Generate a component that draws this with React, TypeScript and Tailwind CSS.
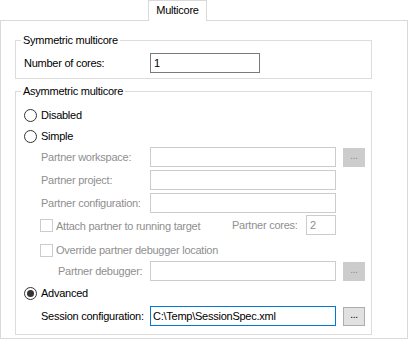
import React from "react";

const GRAY = "text-[#8f8f8f]";

function Radio({ checked }: { checked?: boolean }) {
  return (
    <span className="flex h-[13px] w-[13px] items-center justify-center rounded-full border border-[#333333] bg-white">
      {checked && <span className="h-[7px] w-[7px] rounded-full bg-[#333333]" />}
    </span>
  );
}

function Check() {
  return <span className="block h-[13px] w-[13px] border border-[#cccccc] bg-white" />;
}

function Dots({ enabled }: { enabled?: boolean }) {
  return (
    <div
      className={
        enabled
          ? "ml-[7px] flex h-[19px] w-[22px] items-center justify-center border border-[#adadad] bg-[#e1e1e1] text-[10px] text-black"
          : "ml-[7px] flex h-[19px] w-[22px] items-center justify-center border border-[#cccccc] bg-[#cccccc] text-[10px] text-[#8a8a8a]"
      }
    >
      <span className="-mt-[3px]">...</span>
    </div>
  );
}

function Field({ w, label, lpad = 17, children, button }: { w?: string; label: string; lpad?: number; children?: React.ReactNode; button?: boolean }) {
  return (
    <div className="flex h-[20px] items-center">
      <div className={`w-[126px] ${GRAY}`} style={{ paddingLeft: lpad }}>{label}</div>
      <div className={`h-[20px] ${w ?? "w-[186px]"} border border-[#cccccc] bg-white`}>{children}</div>
      {button && <Dots />}
    </div>
  );
}

export default function App() {
  return (
    <div className="h-[339px] w-[408px] bg-white font-['Liberation_Sans',Arial,sans-serif] text-[11px] leading-[13px] tracking-[-0.25px] text-black">
      <div className="flex pl-[148px]">
        <div className="relative z-10 -mb-px flex h-[21px] w-[59px] items-center justify-center border border-b-0 border-[#d9d9d9] bg-white pb-[1px]">
          Multicore
        </div>
      </div>
      <div className="h-[319px] w-[408px] border border-[#d9d9d9] pl-[14px] pt-[19px]">
        {/* Symmetric group */}
        <div className="relative w-[357px] border border-[#dcdcdc] pb-[5px] pl-[8px] pt-[12px]">
          <span className="absolute left-[5px] top-[-7px] bg-white px-[2px]">Symmetric multicore</span>
          <div className="flex h-[20px] items-center">
            <div className="w-[126px]">Number of cores:</div>
            <div className="flex h-[20px] w-[110px] items-center border border-[#7a7a7a] bg-white pl-[3px]">1</div>
          </div>
        </div>

        {/* Asymmetric group */}
        <div className="relative mt-[12px] w-[357px] border border-[#dcdcdc] pb-[8px] pl-[8px] pr-[6px] pt-[13px]">
          <span className="absolute left-[5px] top-[-7px] bg-white px-[2px]">Asymmetric multicore</span>

          <div className="flex h-[21px] items-center gap-[4px]">
            <Radio />
            <span>Disabled</span>
          </div>
          <div className="flex h-[21px] items-center gap-[4px]">
            <Radio />
            <span>Simple</span>
          </div>

          <Field label="Partner workspace:" button />
          <div className="mt-[3px]">
            <Field label="Partner project:" />
          </div>
          <div className="mt-[3px]">
            <Field label="Partner configuration:" />
          </div>

          <div className="mt-[2px] flex h-[20px] items-center">
            <div className="ml-[16px]">
              <Check />
            </div>
            <span className={`ml-[3px] mt-[3px] flex-1 ${GRAY}`}>Attach partner to running target</span>
            <span className={`w-[74px] ${GRAY}`}>Partner cores:</span>
            <div className={`flex h-[20px] w-[30px] items-center border border-[#cccccc] bg-white pl-[3px] ${GRAY}`}>2</div>
            <div className="w-[29px]" />
          </div>

          <div className="mt-[5px] flex h-[20px] items-center">
            <div className="ml-[16px]">
              <Check />
            </div>
            <span className={`ml-[3px] ${GRAY}`}>Override partner debugger location</span>
          </div>

          <div className="mt-[1px]">
            <Field label="Partner debugger:" lpad={34} button />
          </div>

          <div className="mt-[2px] flex h-[21px] items-center gap-[4px]">
            <Radio checked />
            <span>Advanced</span>
          </div>

          <div className="mt-[2px] flex h-[20px] items-center">
            <div className="w-[126px] pl-[17px]">Session configuration:</div>
            <div className="flex h-[20px] w-[186px] items-center border border-[#0078d7] bg-white pl-[2px]">
              C:\Temp\SessionSpec.xml
            </div>
            <Dots enabled />
          </div>
        </div>
      </div>
    </div>
  );
}
